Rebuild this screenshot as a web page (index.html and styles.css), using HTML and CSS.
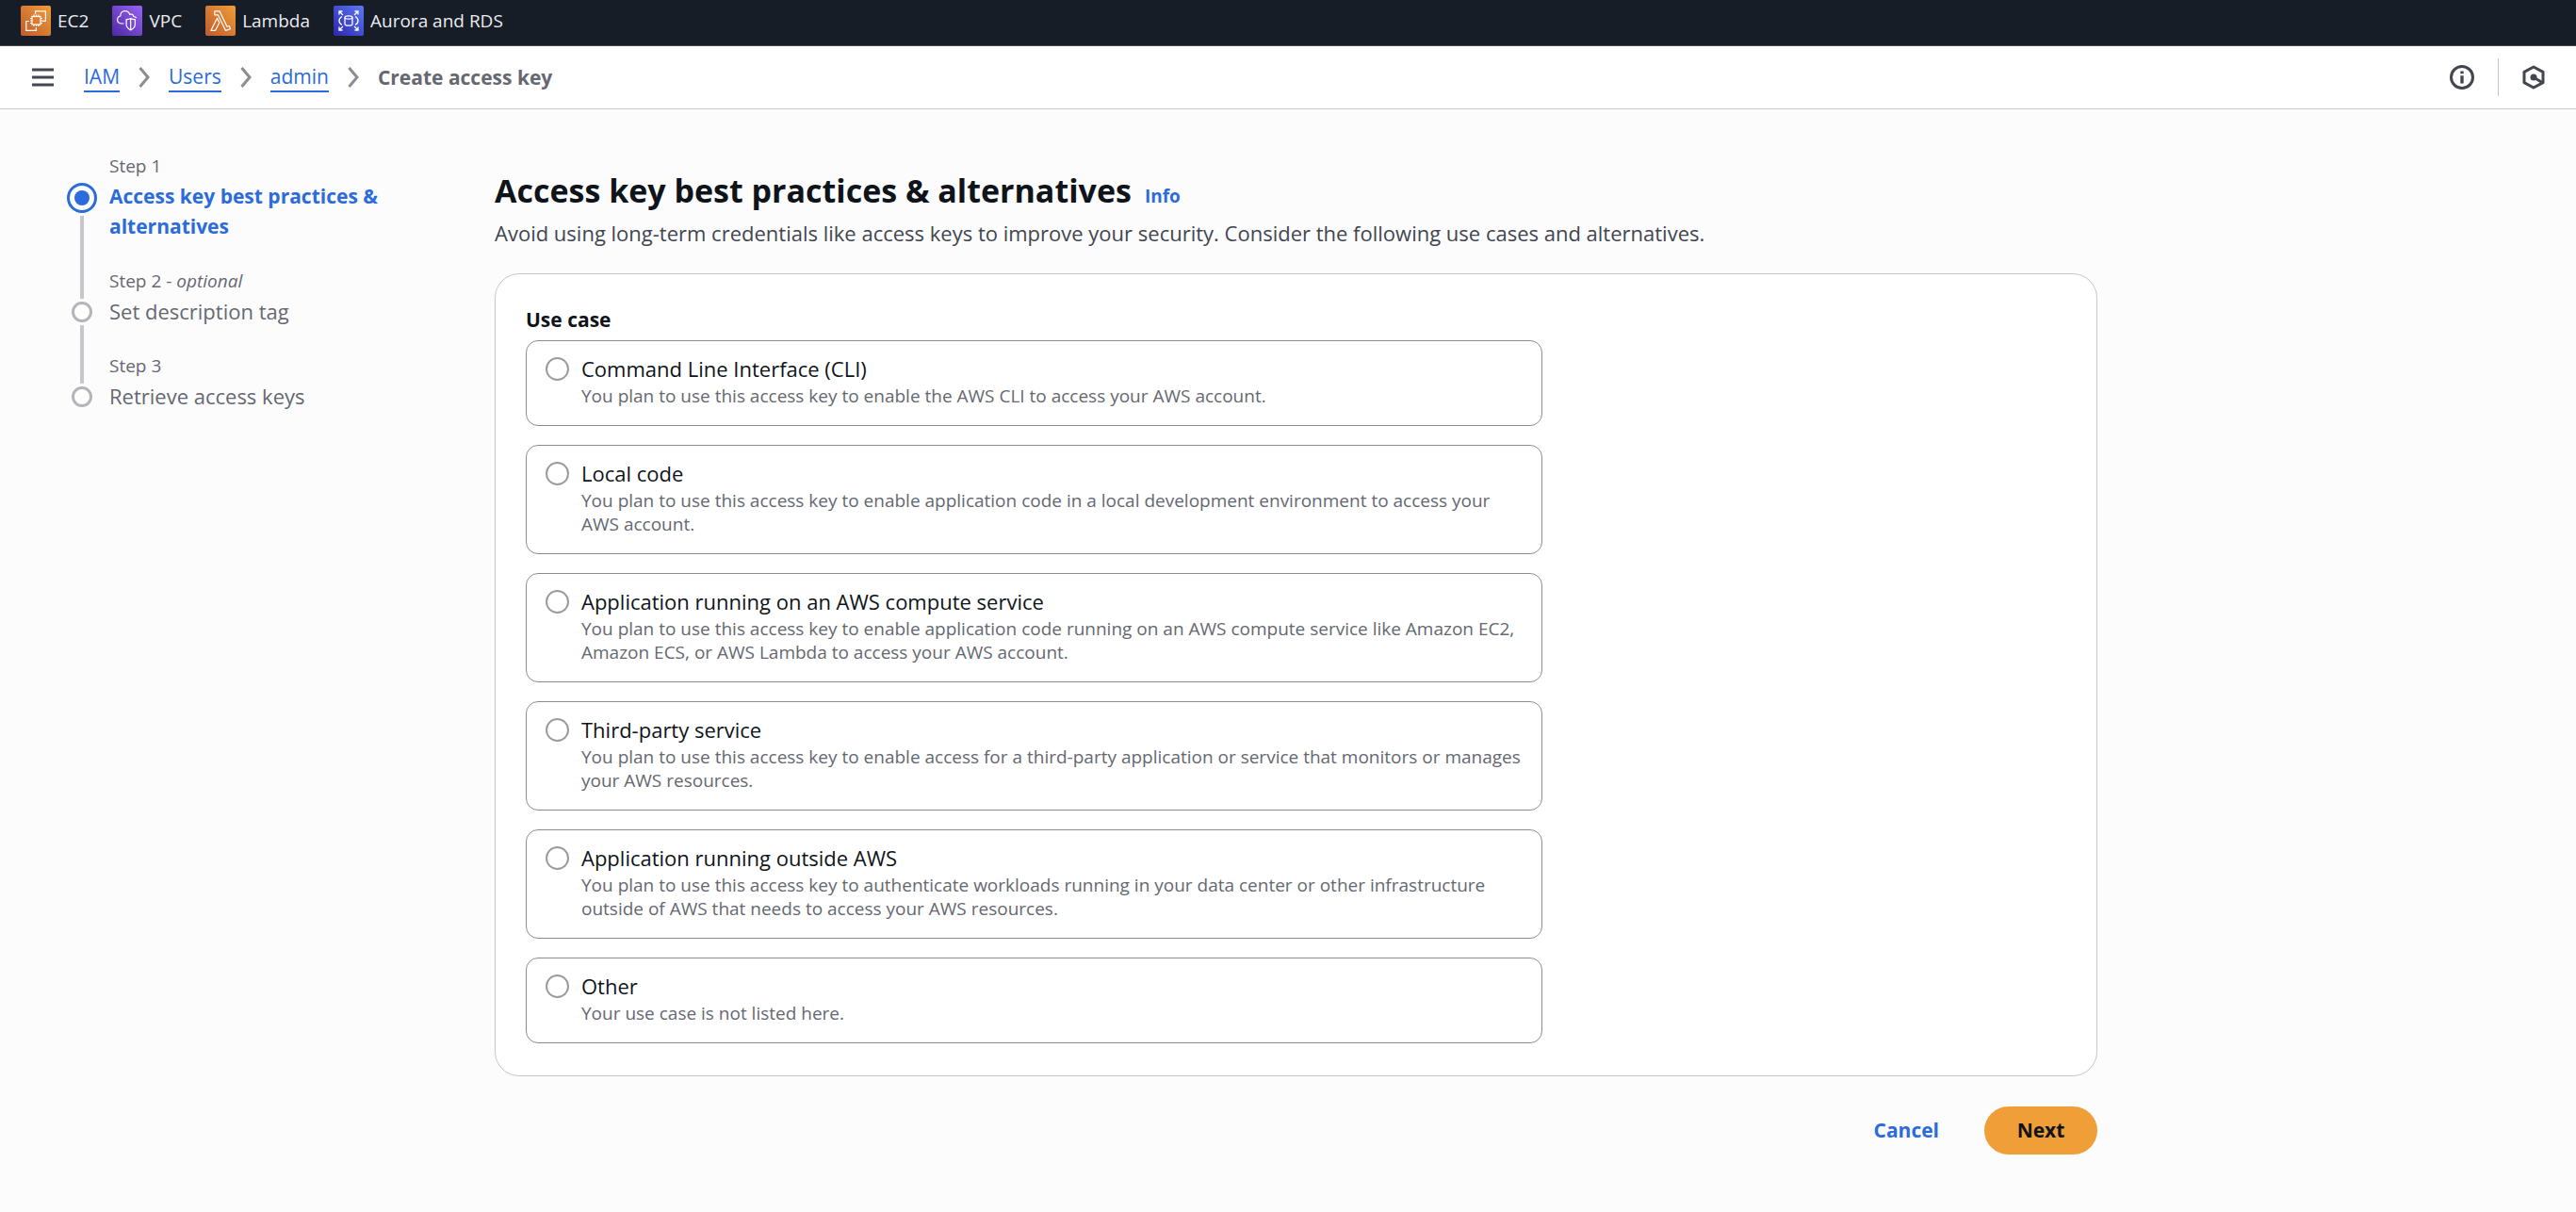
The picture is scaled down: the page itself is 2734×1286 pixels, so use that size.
FILE: index.html
```html
<!DOCTYPE html>
<html lang="en">
<head>
  <meta charset="utf-8">
  <meta name="viewport" content="width=device-width, initial-scale=1">
  <title>Create access key | IAM</title>
  <link rel="stylesheet" href="styles.css">
</head>
<body>
  <nav class="favorites" aria-label="Favorite services">
    <a class="favorite" href="#ec2">
      <svg class="service-icon" viewBox="0 0 32 32" aria-hidden="true">
        <defs>
          <linearGradient id="orange" x1="0" y1="1" x2="1" y2="0"><stop offset="0" stop-color="#bf5b2c"/><stop offset="1" stop-color="#f09c38"/></linearGradient>
          <linearGradient id="purple" x1="0" y1="1" x2="1" y2="0"><stop offset="0" stop-color="#4b29a4"/><stop offset="1" stop-color="#9a63f4"/></linearGradient>
          <linearGradient id="blue" x1="0" y1="1" x2="1" y2="0"><stop offset="0" stop-color="#2b26aa"/><stop offset="1" stop-color="#5b79f6"/></linearGradient>
        </defs>
        <rect width="32" height="32" rx="2" fill="url(#orange)"/>
        <g fill="none" stroke="#fff" stroke-width="1.2">
          <path d="M15.500 9V5.800H26.400V16.400H23M9 16.500H5.800V26.400H16.400V23"/>
          <rect x="12" y="11.500" width="9" height="8.500"/>
          <path d="M14 9.500v2M16.500 9.500v2M19 9.500v2M14 20v2M16.500 20v2M19 20v2M10 13.500h2M10 16h2M10 18.500h2M21 13.500h2M21 16h2M21 18.500h2"/>
        </g>
      </svg>
      EC2
    </a>
    <a class="favorite" href="#vpc">
      <svg class="service-icon" viewBox="0 0 32 32" aria-hidden="true">
        <rect width="32" height="32" rx="2" fill="url(#purple)"/>
        <g fill="none" stroke="#fff" stroke-width="1.200" stroke-linejoin="round">
          <path d="M12.500 19H9.500C7 18.500 5.600 17 5.600 15c0-2.200 1.400-3.600 3.200-4C8.800 7.500 11 5.700 13.600 5.700c2.400 0 4.200 1.300 5.200 3.700 1.900-1 3.700.2 4 2.100 1.300.2 2.200.7 2.900 1.500"/>
          <path d="M19.700 13.400c1.500 1 3 1.200 4.600 1.200v5.600c0 2.500-2 4.200-4.600 5.700-2.600-1.500-4.600-3.200-4.600-5.700v-5.600c1.600 0 3.100-.2 4.600-1.200zM19.700 14v11.500"/>
        </g>
      </svg>
      VPC
    </a>
    <a class="favorite" href="#lambda">
      <svg class="service-icon" viewBox="0 0 32 32" aria-hidden="true">
        <rect width="32" height="32" rx="2" fill="url(#orange)"/>
        <g fill="none" stroke="#fff" stroke-width="1.200" stroke-linejoin="round">
          <path d="M9.800 5.800v4h3.500l8.200 16.600 5-1.600-1.200-3.300-2.300.7L15 5.800z"/>
          <path d="M12.400 13.400L5.900 26.300h4.700l4.200-8.300z"/>
        </g>
      </svg>
      Lambda
    </a>
    <a class="favorite" href="#rds">
      <svg class="service-icon" viewBox="0 0 32 32" aria-hidden="true">
        <rect width="32" height="32" rx="2" fill="url(#blue)"/>
        <g fill="none" stroke="#fff" stroke-width="1.300">
          <path d="M6 9.500V6h3.500M6 6l4 4M22.500 6H26v3.500M26 6l-4 4M6 22.500V26h3.500M6 26l4-4M26 22.500V26h-3.500M26 26l-4-4"/>
          <path d="M9 11.500c-4 2.200-4 6.800 0 9M23 11.500c4 2.200 4 6.800 0 9"/>
          <ellipse cx="16" cy="12.500" rx="4" ry="1.600"/>
          <path d="M12 12.500v7c0 2.200 8 2.200 8 0v-7"/>
        </g>
      </svg>
      Aurora and RDS
    </a>
  </nav>

  <header class="toolbar">
    <button class="icon-button" type="button" aria-label="Open navigation">
      <svg width="23" height="20" viewBox="0 0 23 20" aria-hidden="true"><path d="M0 2h23M0 10h23M0 18h23" stroke="#424650" stroke-width="3"/></svg>
    </button>
    <nav aria-label="Breadcrumbs">
      <ol class="breadcrumbs">
        <li class="crumb"><a class="crumb-link" href="#iam">IAM</a>
          <svg class="chevron" viewBox="0 0 12 22" aria-hidden="true"><path d="M1.500 1l8.500 10-8.500 10"/></svg></li>
        <li class="crumb"><a class="crumb-link" href="#users">Users</a>
          <svg class="chevron" viewBox="0 0 12 22" aria-hidden="true"><path d="M1.500 1l8.500 10-8.500 10"/></svg></li>
        <li class="crumb"><a class="crumb-link" href="#admin">admin</a>
          <svg class="chevron" viewBox="0 0 12 22" aria-hidden="true"><path d="M1.500 1l8.500 10-8.500 10"/></svg></li>
        <li class="crumb crumb-current" aria-current="page">Create access key</li>
      </ol>
    </nav>
    <div class="tools">
      <button class="icon-button" type="button" aria-label="Help panel">
        <svg width="26" height="26" viewBox="0 0 26 26" aria-hidden="true"><circle cx="13" cy="13" r="11.500" fill="none" stroke="#424650" stroke-width="3"/><path d="M11.300 6.500h3.400v2.800h-3.400zM11.300 11.200h3.400v8.300h-3.400z" fill="#424650"/></svg>
      </button>
      <span class="tools-divider"></span>
      <button class="icon-button" type="button" aria-label="Diagnostics">
        <svg width="24" height="26" viewBox="0 0 24 26" aria-hidden="true"><path d="M12 2l10 5.300v11.400L12 24 2 18.700V7.300z" fill="none" stroke="#424650" stroke-width="3" stroke-linejoin="round"/><circle cx="12" cy="13" r="3.500" fill="#424650"/><path d="M12 13l9 5.500" stroke="#424650" stroke-width="3"/></svg>
      </button>
    </div>
  </header>

  <div class="page">
    <nav class="steps" aria-label="Steps">
      <ol class="step-list">
        <li class="step step-active" aria-current="step">
          <div class="rail"><span class="ring"></span><span class="line-after"></span></div>
          <div class="step-text">
            <div class="step-label">Step 1</div>
            <div class="step-title">Access key best practices &amp; alternatives</div>
          </div>
        </li>
        <li class="step">
          <div class="rail"><span class="line-before"></span><span class="ring"></span><span class="line-after"></span></div>
          <div class="step-text">
            <div class="step-label">Step 2 - <i>optional</i></div>
            <div class="step-title">Set description tag</div>
          </div>
        </li>
        <li class="step">
          <div class="rail"><span class="line-before"></span><span class="ring"></span></div>
          <div class="step-text">
            <div class="step-label">Step 3</div>
            <div class="step-title">Retrieve access keys</div>
          </div>
        </li>
      </ol>
    </nav>

    <main class="content">
      <div class="heading">
        <h1 class="title">Access key best practices &amp; alternatives</h1>
        <a class="info" href="#info">Info</a>
      </div>
      <p class="intro">Avoid using long-term credentials like access keys to improve your security. Consider the following use cases and alternatives.</p>

      <form>
        <div class="card">
          <fieldset class="use-case">
            <legend class="legend">Use case</legend>
            <div class="tiles">
              <label class="tile">
                <input class="radio" type="radio" name="use-case" value="cli">
                <span class="tile-text"><span class="tile-title">Command Line Interface (CLI)</span>
                <span class="tile-note">You plan to use this access key to enable the AWS CLI to access your AWS account.</span></span>
              </label>
              <label class="tile">
                <input class="radio" type="radio" name="use-case" value="local">
                <span class="tile-text"><span class="tile-title">Local code</span>
                <span class="tile-note">You plan to use this access key to enable application code in a local development environment to access your AWS account.</span></span>
              </label>
              <label class="tile">
                <input class="radio" type="radio" name="use-case" value="compute">
                <span class="tile-text"><span class="tile-title">Application running on an AWS compute service</span>
                <span class="tile-note">You plan to use this access key to enable application code running on an AWS compute service like Amazon EC2, Amazon ECS, or AWS Lambda to access your AWS account.</span></span>
              </label>
              <label class="tile">
                <input class="radio" type="radio" name="use-case" value="third-party">
                <span class="tile-text"><span class="tile-title">Third-party service</span>
                <span class="tile-note">You plan to use this access key to enable access for a third-party application or service that monitors or manages your AWS resources.</span></span>
              </label>
              <label class="tile">
                <input class="radio" type="radio" name="use-case" value="outside">
                <span class="tile-text"><span class="tile-title">Application running outside AWS</span>
                <span class="tile-note">You plan to use this access key to authenticate workloads running in your data center or other infrastructure outside of AWS that needs to access your AWS resources.</span></span>
              </label>
              <label class="tile">
                <input class="radio" type="radio" name="use-case" value="other">
                <span class="tile-text"><span class="tile-title">Other</span>
                <span class="tile-note">Your use case is not listed here.</span></span>
              </label>
            </div>
          </fieldset>
        </div>
        <div class="actions">
          <button class="button button-link" type="button">Cancel</button>
          <button class="button button-primary" type="submit">Next</button>
        </div>
      </form>
    </main>
  </div>
</body>
</html>
```
FILE: styles.css
```css
:root {
  --text: #0f141a;
  --text-body: #424650;
  --text-muted: #656871;
  --link: #2b6bdb;
  --line: #c6c6cd;
  --line-strong: #8c8c94;
}

* {
  box-sizing: border-box;
}

body {
  margin: 0;
  background: #fcfcfd;
  color: var(--text);
  font-family: "Open Sans", "Noto Sans", sans-serif;
  font-size: 21px;
  line-height: 32px;
}

ol {
  margin: 0;
  padding: 0;
  list-style: none;
}

a {
  color: var(--link);
  text-decoration: none;
}

button {
  font: inherit;
  cursor: pointer;
}

/* Favorites bar */
.favorites {
  display: flex;
  gap: 25px;
  padding: 6px 22px 10px;
  background: #161d26;
  border-bottom: 1px solid #424650;
}

.favorite {
  display: flex;
  align-items: center;
  gap: 7px;
  color: #ebebf0;
  font-size: 19px;
}

.service-icon {
  width: 32px;
  height: 32px;
}

/* Breadcrumb toolbar */
.toolbar {
  display: flex;
  align-items: center;
  gap: 32px;
  min-height: 67px;
  padding: 0 33px 0 34px;
  background: #fff;
  border-bottom: 1px solid var(--line);
}

.icon-button {
  display: flex;
  padding: 0;
  border: 0;
  background: none;
}

.breadcrumbs,
.crumb {
  display: flex;
  align-items: center;
  gap: 20px;
}

.crumb-link {
  border-bottom: 2px solid var(--link);
  line-height: 30px;
}

.crumb-current {
  color: var(--text-muted);
  font-weight: 700;
}

.chevron {
  width: 12px;
  height: 22px;
  fill: none;
  stroke: var(--line-strong);
  stroke-width: 3;
}

.tools {
  display: flex;
  align-items: center;
  gap: 25px;
  margin-left: auto;
}

.tools-divider {
  width: 1px;
  height: 40px;
  background: var(--line);
}

/* Page columns */
.page {
  display: flex;
  gap: 72px;
  padding: 47px 71px 60px;
}

.steps {
  flex: 0 0 382px;
}

.content {
  flex: 1;
  min-width: 0;
  max-width: 1701px;
  padding-top: 17px;
}

/* Step list */
.step {
  display: flex;
  gap: 13px;
  color: var(--text-muted);
}

.rail {
  display: flex;
  flex: 0 0 32px;
  flex-direction: column;
  align-items: center;
  gap: 3px;
}

.ring {
  width: 22px;
  height: 22px;
  border: 3px solid #b4b4bb;
  border-radius: 50%;
  background: #fff;
}

.line-before {
  width: 4px;
  height: 32px;
  background: var(--line);
}

.line-after {
  flex: 1;
  width: 4px;
  background: var(--line);
}

.step-active .ring {
  width: 32px;
  height: 32px;
  margin-top: 31px;
  padding: 5px;
  border-color: var(--link);
  background: var(--link) content-box;
}

.step-text {
  flex: 1;
  padding-bottom: 29px;
}

.step-label {
  margin-bottom: 3px;
  font-size: 19px;
  line-height: 26px;
}

.step-title {
  font-size: 22px;
}

.step-active .step-title {
  color: var(--link);
  font-size: 21px;
  font-weight: 700;
}

/* Heading */
.heading {
  display: flex;
  align-items: baseline;
  gap: 14px;
}

.title {
  margin: 0;
  font-size: 34px;
  font-weight: 700;
  line-height: 44px;
}

.info {
  font-size: 19px;
  font-weight: 700;
}

.intro {
  margin: 7px 0 27px;
  color: var(--text-body);
  font-size: 22px;
}

/* Use case card */
.card {
  padding: 32px 32px 34px;
  border: 1px solid var(--line);
  border-radius: 26px;
  background: #fff;
}

.use-case {
  min-width: 0;
  margin: 0;
  padding: 0;
  border: 0;
}

.legend {
  margin-bottom: 6px;
  padding: 0;
  font-weight: 700;
}

.tiles {
  display: grid;
  gap: 20px;
  width: 66%;
}

.tile {
  display: flex;
  gap: 13px;
  padding: 13px 15px 18px 20px;
  border: 1px solid var(--line-strong);
  border-radius: 13px;
}

.radio {
  flex: none;
  width: 25px;
  height: 25px;
  margin: 4px 0 0;
  appearance: none;
  border: 2px solid #9a9aa2;
  border-radius: 50%;
  background: #fff;
}

.radio:checked {
  border: 8px solid var(--link);
}

.tile-title,
.tile-note {
  display: block;
}

.tile-title {
  margin-bottom: 1px;
  font-size: 22px;
  font-weight: 500;
}

.tile-note {
  color: var(--text-muted);
  font-size: 19px;
  line-height: 25px;
}

/* Form actions */
.actions {
  display: flex;
  justify-content: flex-end;
  gap: 15px;
  margin-top: 32px;
}

.button {
  padding: 9px 33px 10px;
  border: 0;
  border-radius: 26px;
  font-weight: 700;
}

.button-link {
  background: none;
  color: var(--link);
}

.button-primary {
  min-width: 120px;
  background: #f09e38;
  color: var(--text);
}
```
